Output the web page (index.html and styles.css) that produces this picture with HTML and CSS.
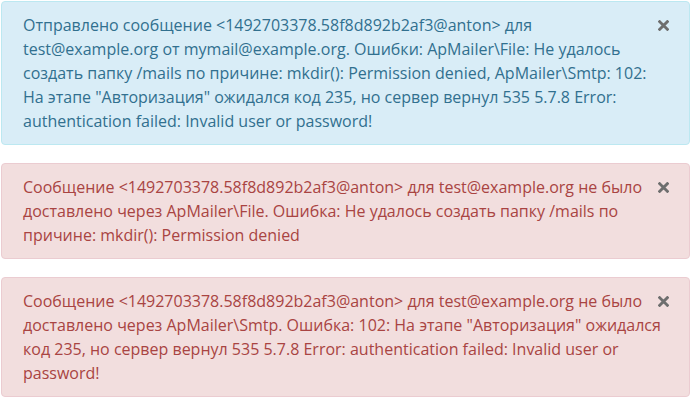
FILE: index.html
```html
<!DOCTYPE html>
<html lang="ru">
<head>
<meta charset="utf-8">
<link rel="stylesheet" href="styles.css">
</head>
<body>
<div class="stack">
  <div class="alert alert-info">
    <div class="msg">Отправлено сообщение &lt;1492703378.58f8d892b2af3@anton&gt; для test@example.org от mymail@example.org. Ошибки: ApMailer\File: Не удалось создать папку /mails по причине: mkdir(): Permission denied, ApMailer\Smtp: 102: На этапе "Авторизация" ожидался код 235, но сервер вернул 535 5.7.8 Error: authentication failed: Invalid user or password!</div>
    <button class="close" type="button" aria-label="Закрыть"><svg viewBox="0 0 10 10" width="11" height="11"><path d="M1.5 1.5 L8.5 8.5 M8.5 1.5 L1.5 8.5" stroke="currentColor" stroke-width="2.6" stroke-linecap="square"/></svg></button>
  </div>
  <div class="alert alert-danger">
    <div class="msg">Сообщение &lt;1492703378.58f8d892b2af3@anton&gt; для test@example.org не было доставлено через ApMailer\File. Ошибка: Не удалось создать папку /mails по причине: mkdir(): Permission denied</div>
    <button class="close" type="button" aria-label="Закрыть"><svg viewBox="0 0 10 10" width="11" height="11"><path d="M1.5 1.5 L8.5 8.5 M8.5 1.5 L1.5 8.5" stroke="currentColor" stroke-width="2.6" stroke-linecap="square"/></svg></button>
  </div>
  <div class="alert alert-danger">
    <div class="msg">Сообщение &lt;1492703378.58f8d892b2af3@anton&gt; для test@example.org не было доставлено через ApMailer\Smtp. Ошибка: 102: На этапе "Авторизация" ожидался код 235, но сервер вернул 535 5.7.8 Error: authentication failed: Invalid user or password!</div>
    <button class="close" type="button" aria-label="Закрыть"><svg viewBox="0 0 10 10" width="11" height="11"><path d="M1.5 1.5 L8.5 8.5 M8.5 1.5 L1.5 8.5" stroke="currentColor" stroke-width="2.6" stroke-linecap="square"/></svg></button>
  </div>
</div>
</body>
</html>
```

FILE: styles.css
```css
html, body {
  margin: 0;
  padding: 0;
  background: #fff;
}
body {
  font-family: "Open Sans", "Noto Sans", sans-serif;
  font-size: 16px;
  line-height: 24px;
}
.stack {
  display: flex;
  flex-direction: column;
  gap: 18px;
  padding: 1px 2px 0 1px;
}
.alert {
  display: flex;
  align-items: flex-start;
  border: 1px solid transparent;
  border-radius: 4px;
  padding: 11px 20px 11px 21px;
}
.msg {
  flex: 1;
  min-width: 0;
}
.alert-info {
  background: #d9edf7;
  border-color: #bce8f1;
  color: #31708f;
}
.alert-danger {
  background: #f2dede;
  border-color: #ebccd1;
  color: #a94442;
}
.close {
  flex: none;
  margin: 7px 0 0 -8px;
  padding: 0;
  border: 0;
  background: transparent;
  color: #6e6e6e;
  line-height: 0;
  cursor: pointer;
}
```
